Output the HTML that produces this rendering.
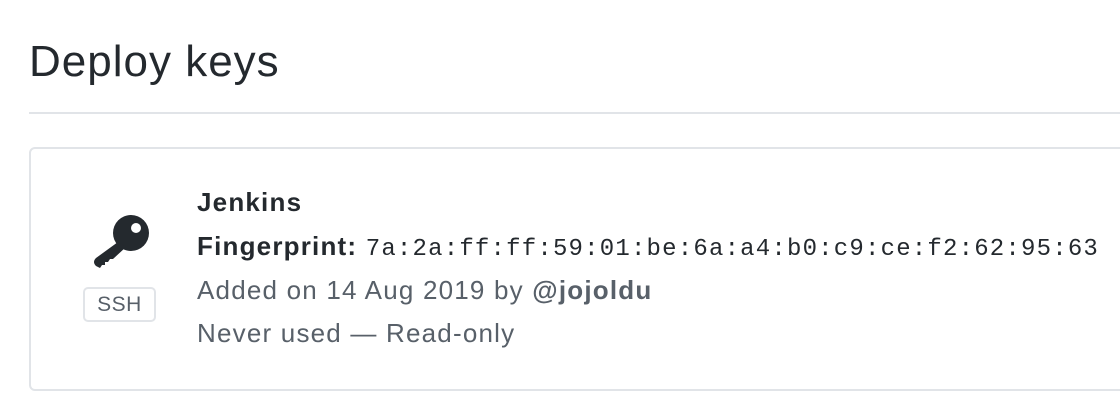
<!DOCTYPE html>
<html><head><style>
body{margin:0;width:1120px;height:400px;background:#fff;font-family:"Liberation Sans",sans-serif;color:#24292e;overflow:hidden;position:relative}
h1{position:absolute;left:29px;top:34px;margin:0;font-size:44px;font-weight:400;line-height:56px;letter-spacing:1px}
.rule{position:absolute;left:29px;right:0;top:112px;height:2px;background:#e1e4e8}
.box{position:absolute;left:29px;top:147px;width:1120px;height:240px;border:2px solid #e1e4e8;border-radius:6px}
.t{position:absolute;left:197px;font-size:26px;letter-spacing:1.2px;white-space:nowrap;line-height:30px}
.mono{font-family:"Liberation Mono",monospace;font-size:24px;letter-spacing:1.2px}
.g{color:#586069}
.badge{position:absolute;left:83px;top:287px;width:69px;height:31px;border:2px solid #e1e4e8;border-radius:5px;font-size:21px;letter-spacing:0.5px;color:#586069;text-align:center;line-height:31px}
</style></head><body>
<h1>Deploy keys</h1>
<div class="rule"></div>
<div class="box"></div>
<svg style="position:absolute;left:88px;top:212px" width="64" height="58" viewBox="0 0 64 58">
<circle cx="43" cy="21" r="18" fill="#24292e"/>
<path d="M30 30 L8 46 Q4 50 8 54 L12 56 L14 53 L17 53 L17 50 L20 50 L22 47 L25 47 L38 35 Z" fill="#24292e"/>
<circle cx="48" cy="16" r="5" fill="#fff"/>
</svg>
<div class="badge">SSH</div>
<div class="t" style="top:187px;font-weight:700">Jenkins</div>
<div class="t" style="top:231px"><b>Fingerprint:</b> <span class="mono">7a:2a:ff:ff:59:01:be:6a:a4:b0:c9:ce:f2:62:95:63</span></div>
<div class="t g" style="top:275px">Added on 14 Aug 2019 by <b>@jojoldu</b></div>
<div class="t g" style="top:318px">Never used — Read-only</div>
</body></html>
